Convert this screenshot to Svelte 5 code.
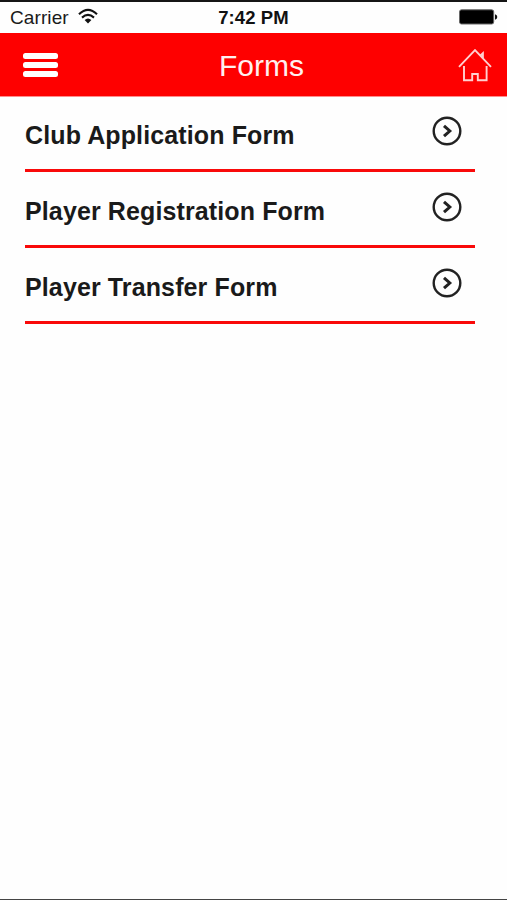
<script>
	const time = "7:42 PM";

	const forms = [
		{ id: "club", name: "Club Application Form" },
		{ id: "player", name: "Player Registration Form" },
		{ id: "transfer", name: "Player Transfer Form" }
	];
</script>

<div class="screen">
	<div class="status">
		<div class="carrier">
			<span>Carrier</span>
			<svg width="20" height="16" viewBox="0 0 20 16">
				<g fill="none" stroke="#111" stroke-width="2.1">
					<path d="M1 6.2Q10 -2.6 19 6.2"/>
					<path d="M4 9.6Q10 4.2 16 9.6"/>
				</g>
				<path d="M6.6 12.1Q10 9 13.4 12.1L10 15.4z" fill="#111"/>
			</svg>
		</div>
		<div class="time">{time}</div>
		<div class="battery">
			<svg width="39" height="16" viewBox="0 0 39 16">
				<rect x="0.5" y="0.8" width="34.2" height="14.2" rx="2" stroke="#666" fill="#000"/>
				<path d="M36 5.3Q38.3 6 38.3 8Q38.3 10 36 10.7z" fill="#111"/>
			</svg>
		</div>
	</div>

	<header>
		<button class="menu" aria-label="Menu">
			<i></i>
			<i></i>
			<i></i>
		</button>
		<h1>Forms</h1>
		<button class="home" aria-label="Home">
			<svg width="34" height="34" viewBox="0 0 34 34" fill="none" stroke="#ffd0d0" stroke-width="1.9">
				<path d="M1 18.8L17 2.2L33 18.8"/>
				<path d="M22.5 7.5L24.9 5.2V10.2"/>
				<path d="M6 18V32.2H14.2V26H19.8V32.2H28.6V18"/>
			</svg>
		</button>
	</header>

	<ul>
		{#each forms as form (form.id)}
		<li>
			<span>{form.name}</span>
			<svg width="30" height="30" viewBox="0 0 30 30" fill="none" stroke="#222">
				<circle cx="15" cy="15" r="13.3" stroke-width="2.4"/>
				<path d="M12 9.8L17.8 15L12 20.2" stroke-width="3"/>
			</svg>
		</li>
		{/each}
	</ul>
</div>

<style>
	:global(body)
	{
		background: #fff;
	}

	.screen
	{
		box-sizing: border-box;
		height: 100vh;
		border-top: 2px solid #151515;
		border-bottom: 1px solid #444;
		background: #fefefe;
		font-family: "Liberation Sans", Arial, sans-serif;
		color: #1a1a1a;
	}

	.status
	{
		box-sizing: border-box;
		display: grid;
		grid-template-columns: 1fr auto 1fr;
		align-items: center;
		height: 31px;
		padding: 1px 10px 0;
		font-size: 19px;
		line-height: 30px;
	}

	.carrier
	{
		display: flex;
		align-items: center;
		gap: 9px;
		letter-spacing: 0.1px;
	}

	.carrier svg
	{
		margin-top: -4px;
	}

	.time
	{
		font-size: 18.5px;
		font-weight: bold;
		letter-spacing: 0.1px;
		line-height: 30px;
		color: #111;
	}

	.battery
	{
		display: flex;
		justify-content: flex-end;
		margin: -2px -1px 0 0;
	}

	header
	{
		box-sizing: border-box;
		display: grid;
		grid-template-columns: 1fr auto 1fr;
		align-items: center;
		height: 63px;
		padding: 1px 15px 0 23px;
		background: #fe0000;
		box-shadow: 0 1px #ff8c8c;
	}

	button
	{
		padding: 0;
		border: none;
		background: none;
		cursor: pointer;
	}

	.menu
	{
		display: flex;
		flex-direction: column;
		gap: 3px;
		width: 35px;
	}

	.menu i
	{
		width: 35px;
		height: 6px;
		border-radius: 2.5px;
		background: white;
	}

	.home
	{
		justify-self: end;
		height: 34px;
	}

	h1
	{
		margin: 0 0 0 8px;
		padding-top: 2px;
		font-size: 30px;
		font-weight: normal;
		line-height: 60px;
		color: #fff0f0;
	}

	ul
	{
		margin: 0;
		padding: 0 32px 0 25px;
		list-style: none;
	}

	li
	{
		box-sizing: border-box;
		display: flex;
		justify-content: space-between;
		height: 76px;
		padding: 20px 13px 0 0;
		border-bottom: 3px solid #f90a0a;
	}

	li span
	{
		font-size: 25px;
		font-weight: bold;
		letter-spacing: 0.12px;
		line-height: 38px;
	}
</style>
